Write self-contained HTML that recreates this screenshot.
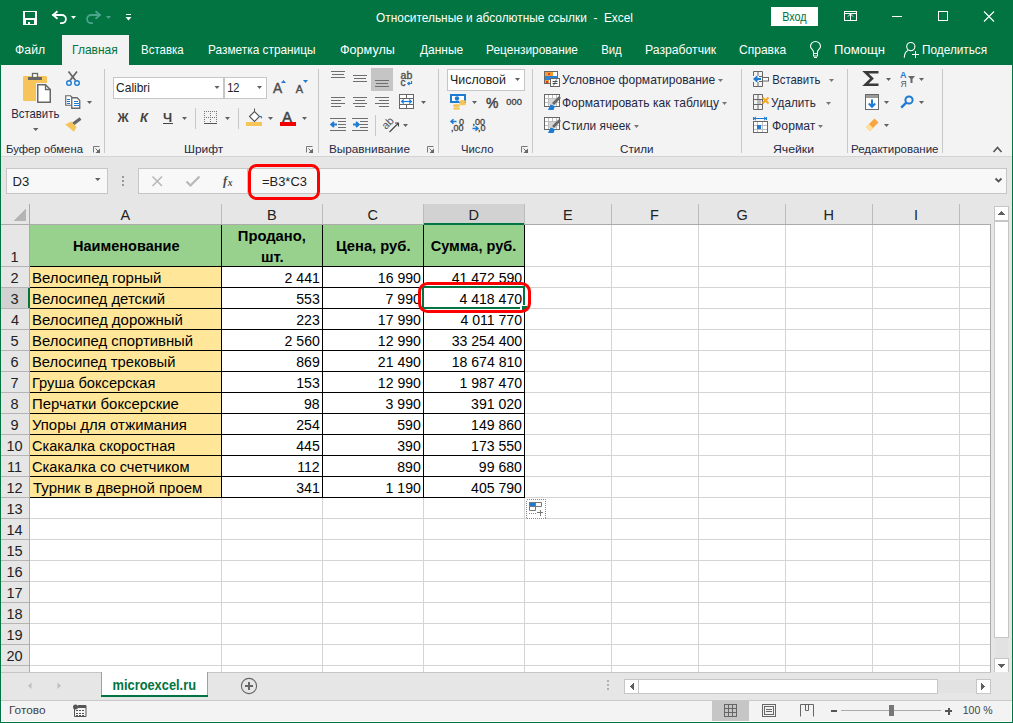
<!DOCTYPE html>
<html><head><meta charset="utf-8"><title>Excel</title>
<style>html,body{margin:0;padding:0;width:1013px;height:723px;overflow:hidden;background:#e6e6e6}
svg{position:absolute;left:0;top:0;display:block}
text{white-space:pre}</style></head><body>
<svg width="1013" height="723" viewBox="0 0 1013 723">
<g shape-rendering="crispEdges">
<rect x="0" y="0" width="1013" height="65" fill="#017441" />
<rect x="62" y="35" width="67" height="30" fill="#f3f3f3" />
<rect x="1" y="65" width="1011" height="91" fill="#f3f3f3" />
<rect x="1" y="156" width="1011" height="1" fill="#d4d4d4" />
<rect x="1" y="157" width="1011" height="515" fill="#e6e6e6" />
<rect x="0" y="65" width="1" height="658" fill="#017441" />
<rect x="1012" y="65" width="1" height="658" fill="#017441" />
<rect x="0" y="722" width="1013" height="1" fill="#017441" />
<rect x="104" y="69" width="1" height="84" fill="#c8c8c8" />
<rect x="318" y="69" width="1" height="84" fill="#c8c8c8" />
<rect x="438" y="69" width="1" height="84" fill="#c8c8c8" />
<rect x="532" y="69" width="1" height="84" fill="#c8c8c8" />
<rect x="741" y="69" width="1" height="84" fill="#c8c8c8" />
<rect x="847" y="69" width="1" height="84" fill="#c8c8c8" />
<rect x="942" y="69" width="1" height="84" fill="#c8c8c8" />
<rect x="6" y="168" width="102" height="26" fill="#c6c6c6" />
<rect x="7" y="169" width="100" height="24" fill="#f8f8f8" />
<rect x="138" y="168" width="110" height="26" fill="#c6c6c6" />
<rect x="139" y="169" width="108" height="24" fill="#f8f8f8" />
<rect x="247" y="168" width="760" height="26" fill="#c6c6c6" />
<rect x="248" y="169" width="758" height="24" fill="#f8f8f8" />
<rect x="122" y="176" width="2" height="2" fill="#9a9a9a" />
<rect x="122" y="180" width="2" height="2" fill="#9a9a9a" />
<rect x="122" y="184" width="2" height="2" fill="#9a9a9a" />
<rect x="30" y="225" width="960" height="447" fill="#ffffff" />
<rect x="424" y="204" width="100" height="20" fill="#d2d2d2" />
<rect x="1" y="288" width="28" height="20" fill="#d2d2d2" />
<rect x="221" y="225" width="1" height="447" fill="#d4d4d4" />
<rect x="322" y="225" width="1" height="447" fill="#d4d4d4" />
<rect x="423" y="225" width="1" height="447" fill="#d4d4d4" />
<rect x="524" y="225" width="1" height="447" fill="#d4d4d4" />
<rect x="611" y="225" width="1" height="447" fill="#d4d4d4" />
<rect x="698" y="225" width="1" height="447" fill="#d4d4d4" />
<rect x="785" y="225" width="1" height="447" fill="#d4d4d4" />
<rect x="872" y="225" width="1" height="447" fill="#d4d4d4" />
<rect x="959" y="225" width="1" height="447" fill="#d4d4d4" />
<rect x="30" y="266" width="960" height="1" fill="#d4d4d4" />
<rect x="30" y="287" width="960" height="1" fill="#d4d4d4" />
<rect x="30" y="308" width="960" height="1" fill="#d4d4d4" />
<rect x="30" y="329" width="960" height="1" fill="#d4d4d4" />
<rect x="30" y="350" width="960" height="1" fill="#d4d4d4" />
<rect x="30" y="371" width="960" height="1" fill="#d4d4d4" />
<rect x="30" y="392" width="960" height="1" fill="#d4d4d4" />
<rect x="30" y="413" width="960" height="1" fill="#d4d4d4" />
<rect x="30" y="434" width="960" height="1" fill="#d4d4d4" />
<rect x="30" y="455" width="960" height="1" fill="#d4d4d4" />
<rect x="30" y="476" width="960" height="1" fill="#d4d4d4" />
<rect x="30" y="497" width="960" height="1" fill="#d4d4d4" />
<rect x="30" y="518" width="960" height="1" fill="#d4d4d4" />
<rect x="30" y="539" width="960" height="1" fill="#d4d4d4" />
<rect x="30" y="560" width="960" height="1" fill="#d4d4d4" />
<rect x="30" y="581" width="960" height="1" fill="#d4d4d4" />
<rect x="30" y="602" width="960" height="1" fill="#d4d4d4" />
<rect x="30" y="623" width="960" height="1" fill="#d4d4d4" />
<rect x="30" y="644" width="960" height="1" fill="#d4d4d4" />
<rect x="30" y="665" width="960" height="1" fill="#d4d4d4" />
<rect x="30" y="225" width="191" height="41" fill="#98d18d" />
<rect x="222" y="225" width="100" height="41" fill="#98d18d" />
<rect x="323" y="225" width="100" height="41" fill="#98d18d" />
<rect x="424" y="225" width="100" height="41" fill="#98d18d" />
<rect x="30" y="267" width="191" height="20" fill="#ffe699" />
<rect x="30" y="288" width="191" height="20" fill="#ffe699" />
<rect x="30" y="309" width="191" height="20" fill="#ffe699" />
<rect x="30" y="330" width="191" height="20" fill="#ffe699" />
<rect x="30" y="351" width="191" height="20" fill="#ffe699" />
<rect x="30" y="372" width="191" height="20" fill="#ffe699" />
<rect x="30" y="393" width="191" height="20" fill="#ffe699" />
<rect x="30" y="414" width="191" height="20" fill="#ffe699" />
<rect x="30" y="435" width="191" height="20" fill="#ffe699" />
<rect x="30" y="456" width="191" height="20" fill="#ffe699" />
<rect x="30" y="477" width="191" height="20" fill="#ffe699" />
<rect x="221" y="225" width="1" height="273" fill="#000" />
<rect x="322" y="225" width="1" height="273" fill="#000" />
<rect x="423" y="225" width="1" height="273" fill="#000" />
<rect x="524" y="225" width="1" height="273" fill="#000" />
<rect x="30" y="266" width="495" height="1" fill="#000" />
<rect x="30" y="287" width="495" height="1" fill="#000" />
<rect x="30" y="308" width="495" height="1" fill="#000" />
<rect x="30" y="329" width="495" height="1" fill="#000" />
<rect x="30" y="350" width="495" height="1" fill="#000" />
<rect x="30" y="371" width="495" height="1" fill="#000" />
<rect x="30" y="392" width="495" height="1" fill="#000" />
<rect x="30" y="413" width="495" height="1" fill="#000" />
<rect x="30" y="434" width="495" height="1" fill="#000" />
<rect x="30" y="455" width="495" height="1" fill="#000" />
<rect x="30" y="476" width="495" height="1" fill="#000" />
<rect x="30" y="497" width="495" height="1" fill="#000" />
<rect x="29" y="204" width="1" height="20" fill="#bcbcbc" />
<rect x="221" y="204" width="1" height="20" fill="#bcbcbc" />
<rect x="322" y="204" width="1" height="20" fill="#bcbcbc" />
<rect x="423" y="204" width="1" height="20" fill="#bcbcbc" />
<rect x="524" y="204" width="1" height="20" fill="#bcbcbc" />
<rect x="611" y="204" width="1" height="20" fill="#bcbcbc" />
<rect x="698" y="204" width="1" height="20" fill="#bcbcbc" />
<rect x="785" y="204" width="1" height="20" fill="#bcbcbc" />
<rect x="872" y="204" width="1" height="20" fill="#bcbcbc" />
<rect x="959" y="204" width="1" height="20" fill="#bcbcbc" />
<rect x="1" y="224" width="990" height="1" fill="#ababab" />
<rect x="29" y="204" width="1" height="468" fill="#ababab" />
<rect x="1" y="266" width="28" height="1" fill="#b4b4b4" />
<rect x="1" y="287" width="28" height="1" fill="#b4b4b4" />
<rect x="1" y="308" width="28" height="1" fill="#b4b4b4" />
<rect x="1" y="329" width="28" height="1" fill="#b4b4b4" />
<rect x="1" y="350" width="28" height="1" fill="#b4b4b4" />
<rect x="1" y="371" width="28" height="1" fill="#b4b4b4" />
<rect x="1" y="392" width="28" height="1" fill="#b4b4b4" />
<rect x="1" y="413" width="28" height="1" fill="#b4b4b4" />
<rect x="1" y="434" width="28" height="1" fill="#b4b4b4" />
<rect x="1" y="455" width="28" height="1" fill="#b4b4b4" />
<rect x="1" y="476" width="28" height="1" fill="#b4b4b4" />
<rect x="1" y="497" width="28" height="1" fill="#b4b4b4" />
<rect x="1" y="518" width="28" height="1" fill="#b4b4b4" />
<rect x="1" y="539" width="28" height="1" fill="#b4b4b4" />
<rect x="1" y="560" width="28" height="1" fill="#b4b4b4" />
<rect x="1" y="581" width="28" height="1" fill="#b4b4b4" />
<rect x="1" y="602" width="28" height="1" fill="#b4b4b4" />
<rect x="1" y="623" width="28" height="1" fill="#b4b4b4" />
<rect x="1" y="644" width="28" height="1" fill="#b4b4b4" />
<rect x="1" y="665" width="28" height="1" fill="#b4b4b4" />
<rect x="424" y="223" width="100" height="2" fill="#017441" />
<rect x="28" y="288" width="2" height="20" fill="#017441" />
<rect x="990" y="224" width="1" height="448" fill="#ababab" />
<rect x="1" y="672" width="990" height="1" fill="#c6c6c6" />
<path d="M26 208 L26 221 L13 221 Z" fill="#b4b4b4" stroke="none" stroke-width="1" />
<rect x="994" y="206" width="15" height="15" fill="#c6c6c6" />
<rect x="995" y="207" width="13" height="13" fill="#ffffff" />
<rect x="994" y="221" width="15" height="417" fill="#c6c6c6" />
<rect x="995" y="222" width="13" height="415" fill="#ffffff" />
<rect x="995" y="638" width="13" height="20" fill="#e2e2e2" />
<rect x="994" y="658" width="15" height="14" fill="#c6c6c6" />
<rect x="995" y="659" width="13" height="13" fill="#ffffff" />
<path d="M997.5 215 L1005 215 L1001.25 211 Z" fill="#606060" stroke="none" stroke-width="1" />
<path d="M997.5 664 L1005 664 L1001.25 668 Z" fill="#606060" stroke="none" stroke-width="1" />
<rect x="1" y="673" width="1011" height="27" fill="#e6e6e6" />
<rect x="101" y="672" width="1" height="24" fill="#a0a0a0" />
<rect x="207" y="672" width="1" height="24" fill="#a0a0a0" />
<rect x="102" y="672" width="105" height="23" fill="#ffffff" />
<rect x="101" y="695" width="107" height="2" fill="#017441" />
<rect x="1" y="700" width="1011" height="1" fill="#c8c8c8" />
<rect x="607" y="680" width="2" height="2" fill="#b0b0b0" />
<rect x="607" y="684" width="2" height="2" fill="#b0b0b0" />
<rect x="607" y="688" width="2" height="2" fill="#b0b0b0" />
<rect x="624" y="679" width="15" height="15" fill="#c6c6c6" />
<rect x="625" y="680" width="13" height="13" fill="#ffffff" />
<rect x="638" y="679" width="300" height="15" fill="#c6c6c6" />
<rect x="639" y="680" width="298" height="13" fill="#ffffff" />
<rect x="938" y="680" width="38" height="13" fill="#e2e2e2" />
<rect x="976" y="679" width="15" height="15" fill="#c6c6c6" />
<rect x="977" y="680" width="13" height="13" fill="#ffffff" />
<path d="M634 683 L634 690.5 L630 686.75 Z" fill="#606060" stroke="none" stroke-width="1" />
<path d="M981 683 L981 690.5 L985 686.75 Z" fill="#606060" stroke="none" stroke-width="1" />
<rect x="1" y="701" width="1011" height="21" fill="#ffffff" />
<rect x="2" y="701" width="1009" height="20" fill="#f3f3f3" />
<rect x="712" y="701" width="37" height="20" fill="#c6c6c6" />
<rect x="771" y="7" width="47" height="19" fill="#ffffff" rx="1"/>
</g>
<g>
<rect x="23" y="11" width="14" height="14" fill="#ffffff" shape-rendering="crispEdges"/>
<rect x="25" y="12" width="10" height="5.5" fill="#017441" shape-rendering="crispEdges"/>
<rect x="26" y="20" width="8" height="4" fill="#017441" shape-rendering="crispEdges"/>
<rect x="28" y="22" width="2" height="2" fill="#ffffff" shape-rendering="crispEdges"/>
<path d="M52.5 15 H61.8 A4.1 4.1 0 0 1 61.8 23.2 H60" fill="none" stroke="#fff" stroke-width="1.8"/>
<path d="M57.5 11.2 L53 15 L57.5 18.8" fill="none" stroke="#fff" stroke-width="1.8"/>
<path d="M71 16 h5 l-2.5 3 z" fill="#ffffff"/>
<g transform="translate(153,0) scale(-1,1)"><path d="M52.5 15 H61.8 A4.1 4.1 0 0 1 61.8 23.2 H60" fill="none" stroke="#4aa58c" stroke-width="1.8"/><path d="M57.5 11.2 L53 15 L57.5 18.8" fill="none" stroke="#4aa58c" stroke-width="1.8"/></g>
<path d="M106 16 h5 l-2.5 3 z" fill="#4aa58c"/>
<rect x="126" y="14" width="5" height="1.2" fill="#ffffff" shape-rendering="crispEdges"/>
<path d="M125.5 17 h6 l-3.0 3.5 z" fill="#ffffff"/>
<rect x="844.5" y="11.5" width="12" height="9" fill="none" stroke="#fff" stroke-width="1"/>
<rect x="845" y="13" width="11" height="1" fill="#ffffff" shape-rendering="crispEdges"/>
<rect x="850" y="14" width="1" height="6.5" fill="#ffffff" shape-rendering="crispEdges"/>
<path d="M848 16.5 L850.5 14 L853 16.5" fill="none" stroke="#fff" stroke-width="1"/>
<rect x="892" y="16" width="10" height="1" fill="#ffffff" shape-rendering="crispEdges"/>
<rect x="938.5" y="11.5" width="9" height="9" fill="none" stroke="#fff" stroke-width="1"/>
<path d="M984 11.5 L994 21.5 M994 11.5 L984 21.5" stroke="#fff" stroke-width="1.1"/>
<path d="M813.5 53 V51.5 C813 49.5 810.5 48.5 810.5 46.5 A5 5 0 0 1 820.5 46.5 C820.5 48.5 818 49.5 817.5 51.5 V53" fill="none" stroke="#fff" stroke-width="1.1"/>
<rect x="813.5" y="53.5" width="4" height="2.5" fill="none" stroke="#fff" stroke-width="1"/>
<rect x="814" y="57" width="3" height="1" fill="#ffffff" shape-rendering="crispEdges"/>
<circle cx="910.8" cy="46.6" r="4.1" fill="none" stroke="#fff" stroke-width="1.1"/>
<path d="M907.8 50.5 C905.5 51.8 904.3 54.5 904.3 57.8" fill="none" stroke="#fff" stroke-width="1.1"/>
<rect x="912" y="54" width="7" height="1" fill="#ffffff" shape-rendering="crispEdges"/>
<rect x="915" y="51" width="1" height="7" fill="#ffffff" shape-rendering="crispEdges"/>
<rect x="23" y="76" width="24" height="25" rx="1.2" fill="#f7c45a"/>
<rect x="36" y="83" width="16" height="21" fill="#f3f3f3" shape-rendering="crispEdges"/>
<rect x="28" y="77" width="14" height="3" fill="#676767" shape-rendering="crispEdges"/>
<rect x="32.5" y="73.5" width="5" height="4" fill="#fff" stroke="#676767" stroke-width="1.3"/>
<path d="M37.75 84.75 H45.5 L50.25 89.5 V102.25 H37.75 Z" fill="#fff" stroke="#676767" stroke-width="1.5"/>
<path d="M45.5 84.75 V89.5 H50.25" fill="none" stroke="#676767" stroke-width="1.3"/>
<path d="M33 128 h5.5 l-2.75 3 z" fill="#606060"/>
<path d="M68.5 71.5 L75.5 80.5 M77 71.5 L70 80.5" stroke="#676767" stroke-width="1.8"/>
<circle cx="69" cy="83" r="2.3" fill="none" stroke="#1e7bd3" stroke-width="1.4"/><circle cx="77" cy="83" r="2.3" fill="none" stroke="#1e7bd3" stroke-width="1.4"/>
<path d="M65.75 95.75 H70.5 L72.5 97.75 V105.25 H65.75 Z" fill="#fff" stroke="#676767" stroke-width="1.2"/>
<rect x="67" y="99" width="3" height="1" fill="#1e7bd3" shape-rendering="crispEdges"/>
<rect x="67" y="101" width="3" height="1" fill="#1e7bd3" shape-rendering="crispEdges"/>
<rect x="67" y="103" width="3" height="1" fill="#1e7bd3" shape-rendering="crispEdges"/>
<path d="M71.75 97.75 H77 L79.75 100.5 V108.25 H71.75 Z" fill="#fff" stroke="#676767" stroke-width="1.3"/>
<rect x="73.5" y="101" width="4" height="1" fill="#1e7bd3" shape-rendering="crispEdges"/>
<rect x="73.5" y="103" width="5" height="1" fill="#1e7bd3" shape-rendering="crispEdges"/>
<rect x="73.5" y="105" width="5" height="1" fill="#1e7bd3" shape-rendering="crispEdges"/>
<path d="M87 101 h5 l-2.5 3 z" fill="#606060"/>
<path d="M72.5 124.5 L80.5 118.5" stroke="#676767" stroke-width="3.2"/>
<path d="M65.2 124.6 L71.2 121.5 L76.5 127 L74 131.8 Z" fill="#f7c45a"/>
<path d="M93.5 152.5 V146.5 H99.5" fill="none" stroke="#777" stroke-width="1"/>
<path d="M100 153 V148.5 L95.5 153 Z" fill="#666"/>
<path d="M95.5 148.5 L98.5 151.5" stroke="#666" stroke-width="1"/>
<path d="M306.5 152.5 V146.5 H312.5" fill="none" stroke="#777" stroke-width="1"/>
<path d="M313 153 V148.5 L308.5 153 Z" fill="#666"/>
<path d="M308.5 148.5 L311.5 151.5" stroke="#666" stroke-width="1"/>
<path d="M427.5 152.5 V146.5 H433.5" fill="none" stroke="#777" stroke-width="1"/>
<path d="M434 153 V148.5 L429.5 153 Z" fill="#666"/>
<path d="M429.5 148.5 L432.5 151.5" stroke="#666" stroke-width="1"/>
<path d="M521.5 152.5 V146.5 H527.5" fill="none" stroke="#777" stroke-width="1"/>
<path d="M528 153 V148.5 L523.5 153 Z" fill="#666"/>
<path d="M523.5 148.5 L526.5 151.5" stroke="#666" stroke-width="1"/>
<rect x="113" y="77" width="111" height="22" fill="#c6c6c6" shape-rendering="crispEdges"/>
<rect x="114" y="78" width="109" height="20" fill="#ffffff" shape-rendering="crispEdges"/>
<rect x="224" y="77" width="43" height="22" fill="#c6c6c6" shape-rendering="crispEdges"/>
<rect x="225" y="78" width="41" height="20" fill="#ffffff" shape-rendering="crispEdges"/>
<path d="M214.5 86 h5 l-2.5 3 z" fill="#606060"/>
<path d="M257 86 h5 l-2.5 3 z" fill="#606060"/>
<text transform="translate(273,93) scale(0.95,1)" font-family="Liberation Sans" font-size="14.5" fill="#4a4a4a" stroke="#4a4a4a" stroke-width="0.4">A</text>
<path d="M281 83 L283.5 80 L286 83 Z" fill="#1e7bd3"/>
<text transform="translate(295.8,93) scale(0.95,1)" font-family="Liberation Sans" font-size="11.5" fill="#4a4a4a" stroke="#4a4a4a" stroke-width="0.4">A</text>
<path d="M303 80 L308 80 L305.5 83 Z" fill="#1e7bd3"/>
<text transform="translate(117.5,122) scale(0.95,1)" font-family="Liberation Sans" font-size="13" font-weight="bold" fill="#444">Ж</text>
<text x="140" y="122" font-family="Liberation Sans" font-size="13" font-weight="bold" font-style="italic" fill="#444">К</text>
<text x="163" y="122" font-family="Liberation Sans" font-size="13" font-weight="bold" fill="#444">Ч</text>
<rect x="163" y="123" width="10" height="1.3" fill="#444" shape-rendering="crispEdges"/>
<path d="M182 117 h5 l-2.5 3 z" fill="#606060"/>
<rect x="195" y="108" width="1" height="21" fill="#c8c8c8" shape-rendering="crispEdges"/>
<rect x="204" y="111" width="1" height="1" fill="#777" shape-rendering="crispEdges"/>
<rect x="204" y="117" width="1" height="1" fill="#777" shape-rendering="crispEdges"/>
<rect x="206" y="111" width="1" height="1" fill="#777" shape-rendering="crispEdges"/>
<rect x="206" y="117" width="1" height="1" fill="#777" shape-rendering="crispEdges"/>
<rect x="208" y="111" width="1" height="1" fill="#777" shape-rendering="crispEdges"/>
<rect x="208" y="117" width="1" height="1" fill="#777" shape-rendering="crispEdges"/>
<rect x="210" y="111" width="1" height="1" fill="#777" shape-rendering="crispEdges"/>
<rect x="210" y="117" width="1" height="1" fill="#777" shape-rendering="crispEdges"/>
<rect x="212" y="111" width="1" height="1" fill="#777" shape-rendering="crispEdges"/>
<rect x="212" y="117" width="1" height="1" fill="#777" shape-rendering="crispEdges"/>
<rect x="214" y="111" width="1" height="1" fill="#777" shape-rendering="crispEdges"/>
<rect x="214" y="117" width="1" height="1" fill="#777" shape-rendering="crispEdges"/>
<rect x="216" y="111" width="1" height="1" fill="#777" shape-rendering="crispEdges"/>
<rect x="216" y="117" width="1" height="1" fill="#777" shape-rendering="crispEdges"/>
<rect x="204" y="111" width="1" height="1" fill="#777" shape-rendering="crispEdges"/>
<rect x="210" y="111" width="1" height="1" fill="#777" shape-rendering="crispEdges"/>
<rect x="216" y="111" width="1" height="1" fill="#777" shape-rendering="crispEdges"/>
<rect x="204" y="113" width="1" height="1" fill="#777" shape-rendering="crispEdges"/>
<rect x="210" y="113" width="1" height="1" fill="#777" shape-rendering="crispEdges"/>
<rect x="216" y="113" width="1" height="1" fill="#777" shape-rendering="crispEdges"/>
<rect x="204" y="115" width="1" height="1" fill="#777" shape-rendering="crispEdges"/>
<rect x="210" y="115" width="1" height="1" fill="#777" shape-rendering="crispEdges"/>
<rect x="216" y="115" width="1" height="1" fill="#777" shape-rendering="crispEdges"/>
<rect x="204" y="117" width="1" height="1" fill="#777" shape-rendering="crispEdges"/>
<rect x="210" y="117" width="1" height="1" fill="#777" shape-rendering="crispEdges"/>
<rect x="216" y="117" width="1" height="1" fill="#777" shape-rendering="crispEdges"/>
<rect x="204" y="119" width="1" height="1" fill="#777" shape-rendering="crispEdges"/>
<rect x="210" y="119" width="1" height="1" fill="#777" shape-rendering="crispEdges"/>
<rect x="216" y="119" width="1" height="1" fill="#777" shape-rendering="crispEdges"/>
<rect x="204" y="121" width="1" height="1" fill="#777" shape-rendering="crispEdges"/>
<rect x="210" y="121" width="1" height="1" fill="#777" shape-rendering="crispEdges"/>
<rect x="216" y="121" width="1" height="1" fill="#777" shape-rendering="crispEdges"/>
<rect x="204" y="123" width="13" height="1.2" fill="#555" shape-rendering="crispEdges"/>
<path d="M225 117 h5 l-2.5 3 z" fill="#606060"/>
<rect x="238" y="108" width="1" height="21" fill="#c8c8c8" shape-rendering="crispEdges"/>
<path d="M249.5 116.5 L254.5 111.5 L259.5 116.5 L254.5 121.5 Z" fill="#fff" stroke="#555" stroke-width="1.1"/>
<path d="M254.5 111.5 V108.5" stroke="#555" stroke-width="1"/>
<path d="M259.5 116.5 C261.5 114.5 262.5 116.5 261.8 119 C261 117.5 260.5 117.5 259.5 116.5 Z" fill="#1e7bd3"/>
<rect x="246" y="122" width="16" height="4" fill="#f7c45a" shape-rendering="crispEdges"/>
<path d="M268 117 h5 l-2.5 3 z" fill="#606060"/>
<text transform="translate(282.3,122) scale(1.0,1)" font-family="Liberation Sans" font-size="14.5" fill="#444" stroke="#444" stroke-width="0.5">A</text>
<rect x="280" y="122" width="16" height="4" fill="#f20000" shape-rendering="crispEdges"/>
<path d="M302 117 h5 l-2.5 3 z" fill="#606060"/>
<rect x="331" y="71" width="14" height="1" fill="#6e6e6e" shape-rendering="crispEdges"/>
<rect x="332" y="74" width="12" height="1" fill="#6e6e6e" shape-rendering="crispEdges"/>
<rect x="331" y="77" width="14" height="1" fill="#6e6e6e" shape-rendering="crispEdges"/>
<rect x="353" y="75" width="14" height="1" fill="#6e6e6e" shape-rendering="crispEdges"/>
<rect x="354" y="78" width="12" height="1" fill="#6e6e6e" shape-rendering="crispEdges"/>
<rect x="353" y="81" width="14" height="1" fill="#6e6e6e" shape-rendering="crispEdges"/>
<rect x="371" y="68" width="22" height="23" fill="#c5c5c5" shape-rendering="crispEdges"/>
<rect x="375" y="80" width="14" height="1" fill="#6e6e6e" shape-rendering="crispEdges"/>
<rect x="376" y="83" width="12" height="1" fill="#6e6e6e" shape-rendering="crispEdges"/>
<rect x="375" y="86" width="14" height="1" fill="#6e6e6e" shape-rendering="crispEdges"/>
<rect x="331" y="97" width="14" height="1" fill="#6e6e6e" shape-rendering="crispEdges"/>
<rect x="353" y="97" width="14" height="1" fill="#6e6e6e" shape-rendering="crispEdges"/>
<rect x="375" y="97" width="14" height="1" fill="#6e6e6e" shape-rendering="crispEdges"/>
<rect x="331" y="100" width="10" height="1" fill="#6e6e6e" shape-rendering="crispEdges"/>
<rect x="355" y="100" width="10" height="1" fill="#6e6e6e" shape-rendering="crispEdges"/>
<rect x="379" y="100" width="10" height="1" fill="#6e6e6e" shape-rendering="crispEdges"/>
<rect x="331" y="103" width="14" height="1" fill="#6e6e6e" shape-rendering="crispEdges"/>
<rect x="353" y="103" width="14" height="1" fill="#6e6e6e" shape-rendering="crispEdges"/>
<rect x="375" y="103" width="14" height="1" fill="#6e6e6e" shape-rendering="crispEdges"/>
<rect x="331" y="106" width="10" height="1" fill="#6e6e6e" shape-rendering="crispEdges"/>
<rect x="355" y="106" width="10" height="1" fill="#6e6e6e" shape-rendering="crispEdges"/>
<rect x="379" y="106" width="10" height="1" fill="#6e6e6e" shape-rendering="crispEdges"/>
<text transform="translate(400.6,78.6) scale(1.05,1)" font-family="Liberation Sans" font-size="10" fill="#505050" stroke="#505050" stroke-width="0.35">ab</text>
<text x="400.6" y="86" font-family="Liberation Sans" font-size="10" fill="#505050" stroke="#505050" stroke-width="0.35">c</text>
<path d="M411.5 81 V83.5 H408.5" fill="none" stroke="#1e7bd3" stroke-width="1.2"/><path d="M409.5 82 L407.8 83.5 L409.5 85" fill="none" stroke="#1e7bd3" stroke-width="1.2"/>
<rect x="399.5" y="94.5" width="14" height="14" fill="#fff" stroke="#676767" stroke-width="1" shape-rendering="crispEdges"/>
<rect x="400" y="98" width="13" height="1" fill="#676767" shape-rendering="crispEdges"/>
<rect x="400" y="104" width="13" height="1" fill="#676767" shape-rendering="crispEdges"/>
<rect x="406" y="95" width="1" height="3" fill="#676767" shape-rendering="crispEdges"/>
<rect x="406" y="105" width="1" height="3" fill="#676767" shape-rendering="crispEdges"/>
<path d="M402 101.5 H411" stroke="#1e7bd3" stroke-width="1.2"/><path d="M403.8 99.5 L401.6 101.5 L403.8 103.5 M409.2 99.5 L411.4 101.5 L409.2 103.5" fill="none" stroke="#1e7bd3" stroke-width="1.2"/>
<path d="M421 101 h5 l-2.5 3 z" fill="#606060"/>
<rect x="330" y="118" width="16" height="1" fill="#6e6e6e" shape-rendering="crispEdges"/>
<rect x="330" y="130" width="16" height="1" fill="#6e6e6e" shape-rendering="crispEdges"/>
<rect x="338" y="121" width="8" height="1" fill="#6e6e6e" shape-rendering="crispEdges"/>
<rect x="338" y="124" width="8" height="1" fill="#6e6e6e" shape-rendering="crispEdges"/>
<rect x="338" y="127" width="8" height="1" fill="#6e6e6e" shape-rendering="crispEdges"/>
<rect x="352" y="118" width="16" height="1" fill="#6e6e6e" shape-rendering="crispEdges"/>
<rect x="352" y="130" width="16" height="1" fill="#6e6e6e" shape-rendering="crispEdges"/>
<rect x="360" y="121" width="8" height="1" fill="#6e6e6e" shape-rendering="crispEdges"/>
<rect x="360" y="124" width="8" height="1" fill="#6e6e6e" shape-rendering="crispEdges"/>
<rect x="360" y="127" width="8" height="1" fill="#6e6e6e" shape-rendering="crispEdges"/>
<path d="M337 124.5 H331.5 M334 122 L331.3 124.5 L334 127" fill="none" stroke="#1e7bd3" stroke-width="2"/>
<path d="M353 124.5 H358.5 M356 122 L358.7 124.5 L356 127" fill="none" stroke="#1e7bd3" stroke-width="2"/>
<rect x="375" y="115" width="1" height="21" fill="#c8c8c8" shape-rendering="crispEdges"/>
<text transform="translate(386,130) rotate(-45)" font-family="Liberation Sans" font-size="11" fill="#555">ab</text>
<path d="M389.5 132 L398.5 123 M395 123 H398.5 V126.5" fill="none" stroke="#444" stroke-width="1.1"/>
<path d="M403 124 h5 l-2.5 3 z" fill="#606060"/>
<rect x="447" y="69" width="78" height="22" fill="#c6c6c6" shape-rendering="crispEdges"/>
<rect x="448" y="70" width="76" height="20" fill="#ffffff" shape-rendering="crispEdges"/>
<path d="M515 78 h5 l-2.5 3 z" fill="#606060"/>
<rect x="451" y="95" width="14" height="7" fill="#fff" stroke="#1e7bd3" stroke-width="2"/>
<circle cx="457" cy="98.5" r="2.2" fill="#1e7bd3"/>
<ellipse cx="462.5" cy="101.5" rx="3.5" ry="1.5" fill="#f7c45a"/><ellipse cx="462.5" cy="104" rx="3.5" ry="1.3" fill="#f7c45a"/>
<ellipse cx="456.5" cy="105.5" rx="3.5" ry="1.5" fill="#f7c45a"/><ellipse cx="456.5" cy="108.5" rx="3.5" ry="1.3" fill="#f7c45a"/>
<path d="M472 101 h5 l-2.5 3 z" fill="#606060"/>
<text transform="translate(486,108) scale(0.93,1)" font-family="Liberation Sans" font-size="15" fill="#444" stroke="#444" stroke-width="0.45">%</text>
<text transform="translate(506.3,105.2) scale(0.95,1)" font-family="Liberation Sans" font-size="9.8" fill="#444" stroke="#444" stroke-width="0.35">000</text>
<path d="M456.5 121.5 H451 M453.5 119.3 L451 121.5 L453.5 123.7" fill="none" stroke="#1e7bd3" stroke-width="1.5"/>
<text x="459" y="124.5" font-family="Liberation Sans" font-size="9" fill="#444" stroke="#444" stroke-width="0.3">0</text>
<text x="451" y="131" font-family="Liberation Sans" font-size="9" fill="#444" stroke="#444" stroke-width="0.3">,00</text>
<text x="472.5" y="124.5" font-family="Liberation Sans" font-size="9" fill="#444" stroke="#444" stroke-width="0.3">,00</text>
<path d="M472.5 128.5 H478 M475.5 126.3 L478 128.5 L475.5 130.7" fill="none" stroke="#1e7bd3" stroke-width="1.5"/>
<text x="478" y="131" font-family="Liberation Sans" font-size="9" fill="#444" stroke="#444" stroke-width="0.3">,0</text>
<rect x="544.5" y="71.5" width="13" height="12" fill="#fff" stroke="#676767" stroke-width="1"/>
<rect x="545" y="72" width="8" height="4" fill="#f39c34" shape-rendering="crispEdges"/>
<rect x="545" y="76" width="12" height="4" fill="#2b83d5" shape-rendering="crispEdges"/>
<rect x="545" y="80" width="4" height="3" fill="#f39c34" shape-rendering="crispEdges"/>
<rect x="548" y="73" width="2" height="2" fill="#e03a1a" shape-rendering="crispEdges"/>
<rect x="546" y="81" width="2" height="2" fill="#e03a1a" shape-rendering="crispEdges"/>
<rect x="550.5" y="78.5" width="9" height="8" fill="#fff" stroke="#676767" stroke-width="1"/>
<path d="M552.5 81.5 H557.5 M552.5 83.5 H557.5 M556.5 79.5 L553.5 85.5" stroke="#444" stroke-width="0.9"/>
<rect x="544.5" y="94.5" width="15" height="12" fill="#fff" stroke="#676767" stroke-width="1"/>
<rect x="548" y="95" width="1" height="11" fill="#bdbdbd" shape-rendering="crispEdges"/>
<rect x="552" y="95" width="1" height="11" fill="#bdbdbd" shape-rendering="crispEdges"/>
<rect x="556" y="95" width="1" height="11" fill="#bdbdbd" shape-rendering="crispEdges"/>
<rect x="545" y="98" width="14" height="1" fill="#bdbdbd" shape-rendering="crispEdges"/>
<rect x="545" y="102" width="14" height="1" fill="#bdbdbd" shape-rendering="crispEdges"/>
<rect x="549" y="99" width="7" height="6" fill="#d5d5d5" shape-rendering="crispEdges"/>
<path d="M553 104 L560 97" stroke="#676767" stroke-width="2.6"/>
<path d="M548 110 L550.5 104.5 L555 106 L553.5 110 Z" fill="#1e7bd3"/>
<rect x="544.5" y="117.5" width="15" height="12" fill="#fff" stroke="#676767" stroke-width="1"/>
<rect x="548" y="118" width="1" height="11" fill="#bdbdbd" shape-rendering="crispEdges"/>
<rect x="552" y="118" width="1" height="11" fill="#bdbdbd" shape-rendering="crispEdges"/>
<rect x="556" y="118" width="1" height="11" fill="#bdbdbd" shape-rendering="crispEdges"/>
<rect x="545" y="121" width="14" height="1" fill="#bdbdbd" shape-rendering="crispEdges"/>
<rect x="545" y="125" width="14" height="1" fill="#bdbdbd" shape-rendering="crispEdges"/>
<rect x="549" y="122" width="7" height="6" fill="#d5d5d5" shape-rendering="crispEdges"/>
<path d="M553 127 L560 120" stroke="#676767" stroke-width="2.6"/>
<path d="M548 133 L550.5 127.5 L555 129 L553.5 133 Z" fill="#1e7bd3"/>
<path d="M718 79 h5 l-2.5 3 z" fill="#777"/>
<path d="M722 102 h5 l-2.5 3 z" fill="#777"/>
<path d="M634 125 h5 l-2.5 3 z" fill="#777"/>
<path d="M753.5 71.5 h9 v15 h-9 z M753.5 76.5 h9 M753.5 81.5 h9 M758 71.5 v5 M758 81.5 v5" fill="none" stroke="#676767" stroke-width="1"/>
<rect x="762.5" y="77.5" width="6" height="3.5" fill="#fff" stroke="#676767" stroke-width="1"/>
<rect x="753" y="76" width="6" height="6" fill="#f3f3f3" shape-rendering="crispEdges"/>
<path d="M761 79 H754.5 M757.3 76.5 L754.5 79 L757.3 81.5" fill="none" stroke="#1e7bd3" stroke-width="2"/>
<path d="M753.5 94.5 h9 v15 h-9 z M753.5 99.5 h9 M753.5 104.5 h9 M758 94.5 v5 M758 104.5 v5" fill="none" stroke="#676767" stroke-width="1"/>
<rect x="757" y="100" width="4" height="4" fill="#bdbdbd" shape-rendering="crispEdges"/>
<path d="M762.5 97.5 L768.5 103.5 M768.5 97.5 L762.5 103.5" stroke="#f5a623" stroke-width="1.8"/>
<path d="M753.5 117 V120 M766.5 117 V120 M754 118.5 H766" stroke="#1e7bd3" stroke-width="1"/><path d="M756 116.8 L754 118.5 L756 120.2 M764 116.8 L766 118.5 L764 120.2" fill="none" stroke="#1e7bd3" stroke-width="1"/>
<rect x="753.5" y="121.5" width="14" height="11" fill="#fff" stroke="#676767" stroke-width="1"/>
<rect x="757" y="122" width="1" height="10" fill="#bdbdbd" shape-rendering="crispEdges"/>
<rect x="762" y="122" width="1" height="10" fill="#bdbdbd" shape-rendering="crispEdges"/>
<rect x="754" y="125" width="13" height="1" fill="#bdbdbd" shape-rendering="crispEdges"/>
<rect x="754" y="129" width="13" height="1" fill="#bdbdbd" shape-rendering="crispEdges"/>
<rect x="757" y="125" width="4" height="4" fill="#1e7bd3" shape-rendering="crispEdges"/>
<path d="M829 79 h5 l-2.5 3 z" fill="#777"/>
<path d="M826 102 h5 l-2.5 3 z" fill="#777"/>
<path d="M818 125 h5 l-2.5 3 z" fill="#777"/>
<path d="M878.5 72.3 H865.5 L872 78.5 L865.5 84.8 H878.5" fill="none" stroke="#3a3a3a" stroke-width="2.6" stroke-linejoin="miter"/>
<path d="M886 78 h5 l-2.5 3 z" fill="#606060"/>
<text x="900" y="78" font-family="Liberation Sans" font-size="9" font-weight="bold" fill="#1e7bd3">A</text>
<text x="900.5" y="87" font-family="Liberation Sans" font-size="8.5" fill="#555">Я</text>
<path d="M908 76 H915 L912.5 79 V83 H910.5 V79 Z" fill="#676767"/>
<path d="M919 78 h5 l-2.5 3 z" fill="#606060"/>
<rect x="865.5" y="94.5" width="13" height="15" fill="#fff" stroke="#676767" stroke-width="1"/>
<rect x="866" y="95" width="12" height="3" fill="#9a9a9a" shape-rendering="crispEdges"/>
<path d="M872 99.5 V106.5 M868.8 103.5 L872 106.8 L875.2 103.5" fill="none" stroke="#1e7bd3" stroke-width="2"/>
<path d="M884 101 h5 l-2.5 3 z" fill="#606060"/>
<circle cx="909" cy="100" r="3.6" fill="none" stroke="#1e7bd3" stroke-width="2"/><path d="M906.3 102.7 L901.2 107.6" stroke="#1e7bd3" stroke-width="2.4"/>
<path d="M919 101 h5 l-2.5 3 z" fill="#606060"/>
<path d="M866 127 L874.5 118.5 L878.5 122.5 L870 131 Z" fill="#f7a640"/><path d="M866 127 L869 124 L873 128 L870 131 Z" fill="#fde39a"/>
<path d="M884 124 h5 l-2.5 3 z" fill="#606060"/>
<path d="M993.5 152 L997.5 147.5 L1001.5 152" fill="none" stroke="#555" stroke-width="1.6"/>
<path d="M95 178 h5.5 l-2.75 3 z" fill="#606060"/>
<path d="M152.5 176.5 L162 186 M162 176.5 L152.5 186" stroke="#b8b8b8" stroke-width="1.6"/>
<path d="M186.5 181.5 L190.5 185.5 L199.5 176.5" fill="none" stroke="#b8b8b8" stroke-width="2.2"/>
<text x="223" y="185" font-family="Liberation Serif" font-size="12.5" font-style="italic" font-weight="bold" fill="#4a4a4a">f</text>
<text x="227.8" y="185.5" font-family="Liberation Serif" font-size="9.5" font-style="italic" font-weight="bold" fill="#4a4a4a">x</text>
<path d="M995.5 178.5 L998.5 181.5 L1001.5 178.5" fill="none" stroke="#555" stroke-width="1.8"/>
<rect x="526.5" y="499.5" width="19" height="19" fill="#fff" stroke="#8a8a8a" stroke-width="1" stroke-dasharray="1,1" shape-rendering="crispEdges"/>
<rect x="529" y="502" width="6" height="4" fill="#1e7bd3" shape-rendering="crispEdges"/>
<path d="M529.5 502.5 H541.5 V506.5 H529.5 Z M529.5 506.5 V510.5 H535.5 V502.5" fill="none" stroke="#777" stroke-width="1"/>
<rect x="537" y="512" width="6" height="1" fill="#777" shape-rendering="crispEdges"/>
<rect x="539.5" y="509.5" width="1" height="6" fill="#777" shape-rendering="crispEdges"/>
<rect x="529" y="513" width="1" height="1" fill="#888" shape-rendering="crispEdges"/>
<rect x="531" y="513" width="1" height="1" fill="#888" shape-rendering="crispEdges"/>
<rect x="533" y="513" width="1" height="1" fill="#888" shape-rendering="crispEdges"/>
<rect x="535" y="513" width="1" height="1" fill="#888" shape-rendering="crispEdges"/>
<path d="M31.5 682.5 V689 L28 685.75 Z" fill="#c0c0c0"/><path d="M57.5 682.5 V689 L61 685.75 Z" fill="#c0c0c0"/>
<circle cx="249" cy="686" r="7.6" fill="none" stroke="#666" stroke-width="1.1"/>
<rect x="245" y="685" width="8" height="2" fill="#666" shape-rendering="crispEdges"/>
<rect x="248" y="682" width="2" height="8" fill="#666" shape-rendering="crispEdges"/>
<circle cx="75.5" cy="707" r="2.5" fill="#555"/>
<path d="M78 705.5 H86 V716.5 H74.5 V709" fill="none" stroke="#555" stroke-width="1"/>
<rect x="78" y="705" width="8" height="2.5" fill="#555" shape-rendering="crispEdges"/>
<rect x="76" y="710" width="2" height="1.2" fill="#555" shape-rendering="crispEdges"/>
<rect x="79" y="710" width="2" height="1.2" fill="#555" shape-rendering="crispEdges"/>
<rect x="82" y="710" width="2" height="1.2" fill="#555" shape-rendering="crispEdges"/>
<rect x="76" y="712.5" width="2" height="1.2" fill="#555" shape-rendering="crispEdges"/>
<rect x="79" y="712.5" width="2" height="1.2" fill="#555" shape-rendering="crispEdges"/>
<rect x="82" y="712.5" width="2" height="1.2" fill="#555" shape-rendering="crispEdges"/>
<rect x="76" y="715" width="2" height="1.2" fill="#555" shape-rendering="crispEdges"/>
<rect x="79" y="715" width="2" height="1.2" fill="#555" shape-rendering="crispEdges"/>
<rect x="82" y="715" width="2" height="1.2" fill="#555" shape-rendering="crispEdges"/>
<rect x="724.5" y="704.5" width="12" height="12" fill="none" stroke="#666" stroke-width="1"/>
<rect x="728" y="705" width="1" height="11" fill="#666" shape-rendering="crispEdges"/>
<rect x="732" y="705" width="1" height="11" fill="#666" shape-rendering="crispEdges"/>
<rect x="725" y="708" width="11" height="1" fill="#666" shape-rendering="crispEdges"/>
<rect x="725" y="712" width="11" height="1" fill="#666" shape-rendering="crispEdges"/>
<rect x="762.5" y="704.5" width="13" height="12" fill="none" stroke="#666" stroke-width="1"/><rect x="764.5" y="706.5" width="9" height="8" fill="none" stroke="#666" stroke-width="1"/>
<rect x="766" y="709" width="6" height="1" fill="#666" shape-rendering="crispEdges"/>
<rect x="766" y="711" width="6" height="1" fill="#666" shape-rendering="crispEdges"/>
<path d="M800.5 716.5 V704.5 H813.5 V716.5 M805.5 704.5 V710.5 H808.5 V704.5" fill="none" stroke="#666" stroke-width="1"/>
<rect x="831" y="710" width="6" height="2" fill="#555" shape-rendering="crispEdges"/>
<rect x="841" y="710" width="100" height="1" fill="#aaaaaa" shape-rendering="crispEdges"/>
<rect x="889" y="705" width="5" height="11" fill="#777" shape-rendering="crispEdges"/>
<rect x="945" y="710" width="7" height="2" fill="#555" shape-rendering="crispEdges"/>
<rect x="947.5" y="707.5" width="2" height="7" fill="#555" shape-rendering="crispEdges"/>
</g>
<g>
<text transform="translate(376.09,22) scale(0.9078,1)" font-family="Liberation Sans" font-size="13.08" font-weight="normal" font-style="normal" fill="#ffffff">Относительные и абсолютные ссылки  -  Excel</text>
<text transform="translate(782.17,21) scale(0.8276,1)" font-family="Liberation Sans" font-size="13.08" font-weight="normal" font-style="normal" fill="#017441">Вход</text>
<text transform="translate(15.07,54) scale(0.9333,1)" font-family="Liberation Sans" font-size="13.08" font-weight="normal" font-style="normal" fill="#ffffff">Файл</text>
<text transform="translate(141.12,54) scale(0.8750,1)" font-family="Liberation Sans" font-size="13.08" font-weight="normal" font-style="normal" fill="#ffffff">Вставка</text>
<text transform="translate(208.09,54) scale(0.9060,1)" font-family="Liberation Sans" font-size="13.08" font-weight="normal" font-style="normal" fill="#ffffff">Разметка страницы</text>
<text transform="translate(340.04,54) scale(0.9636,1)" font-family="Liberation Sans" font-size="13.08" font-weight="normal" font-style="normal" fill="#ffffff">Формулы</text>
<text transform="translate(420.00,54) scale(0.9149,1)" font-family="Liberation Sans" font-size="13.08" font-weight="normal" font-style="normal" fill="#ffffff">Данные</text>
<text transform="translate(486.09,54) scale(0.9100,1)" font-family="Liberation Sans" font-size="13.08" font-weight="normal" font-style="normal" fill="#ffffff">Рецензирование</text>
<text transform="translate(601.13,54) scale(0.8696,1)" font-family="Liberation Sans" font-size="13.08" font-weight="normal" font-style="normal" fill="#ffffff">Вид</text>
<text transform="translate(645.07,54) scale(0.9333,1)" font-family="Liberation Sans" font-size="13.08" font-weight="normal" font-style="normal" fill="#ffffff">Разработчик</text>
<text transform="translate(739.08,54) scale(0.9200,1)" font-family="Liberation Sans" font-size="13.08" font-weight="normal" font-style="normal" fill="#ffffff">Справка</text>
<text x="834.00" y="54" font-family="Liberation Sans" font-size="13.08" font-weight="normal" font-style="normal" fill="#ffffff">Помощн</text>
<text transform="translate(922.10,54) scale(0.9014,1)" font-family="Liberation Sans" font-size="13.08" font-weight="normal" font-style="normal" fill="#ffffff">Поделиться</text>
<text transform="translate(72.08,54) scale(0.9167,1)" font-family="Liberation Sans" font-size="13.08" font-weight="normal" font-style="normal" fill="#017441">Главная</text>
<text transform="translate(11.13,118) scale(0.8704,1)" font-family="Liberation Sans" font-size="13.08" font-weight="normal" font-style="normal" fill="#1e2a44">Вставить</text>
<text transform="translate(6.03,153) scale(0.9744,1)" font-family="Liberation Sans" font-size="11.63" font-weight="normal" font-style="normal" fill="#1e2a44">Буфер обмена</text>
<text transform="translate(183.97,153) scale(1.0270,1)" font-family="Liberation Sans" font-size="11.63" font-weight="normal" font-style="normal" fill="#1e2a44">Шрифт</text>
<text transform="translate(328.99,153) scale(1.0127,1)" font-family="Liberation Sans" font-size="11.63" font-weight="normal" font-style="normal" fill="#1e2a44">Выравнивание</text>
<text transform="translate(461.03,153) scale(0.9688,1)" font-family="Liberation Sans" font-size="11.63" font-weight="normal" font-style="normal" fill="#1e2a44">Число</text>
<text x="620.00" y="153" font-family="Liberation Sans" font-size="11.63" font-weight="normal" font-style="normal" fill="#1e2a44">Стили</text>
<text transform="translate(772.95,153) scale(1.0541,1)" font-family="Liberation Sans" font-size="11.63" font-weight="normal" font-style="normal" fill="#1e2a44">Ячейки</text>
<text transform="translate(851.01,153) scale(0.9885,1)" font-family="Liberation Sans" font-size="11.63" font-weight="normal" font-style="normal" fill="#1e2a44">Редактирование</text>
<text transform="translate(116.08,92) scale(0.9167,1)" font-family="Liberation Sans" font-size="13.08" font-weight="normal" font-style="normal" fill="#222">Calibri</text>
<text transform="translate(227.15,92) scale(0.8462,1)" font-family="Liberation Sans" font-size="13.08" font-weight="normal" font-style="normal" fill="#222">12</text>
<text transform="translate(450.05,84) scale(0.9474,1)" font-family="Liberation Sans" font-size="13.08" font-weight="normal" font-style="normal" fill="#222">Числовой</text>
<text transform="translate(562.08,84) scale(0.9212,1)" font-family="Liberation Sans" font-size="13.08" font-weight="normal" font-style="normal" fill="#1e2a44">Условное форматирование</text>
<text transform="translate(562.08,107) scale(0.9231,1)" font-family="Liberation Sans" font-size="13.08" font-weight="normal" font-style="normal" fill="#1e2a44">Форматировать как таблицу</text>
<text transform="translate(562.09,130) scale(0.9054,1)" font-family="Liberation Sans" font-size="13.08" font-weight="normal" font-style="normal" fill="#1e2a44">Стили ячеек</text>
<text transform="translate(772.13,84) scale(0.8704,1)" font-family="Liberation Sans" font-size="13.08" font-weight="normal" font-style="normal" fill="#1e2a44">Вставить</text>
<text transform="translate(771.10,107) scale(0.8958,1)" font-family="Liberation Sans" font-size="13.08" font-weight="normal" font-style="normal" fill="#1e2a44">Удалить</text>
<text transform="translate(772.07,130) scale(0.9333,1)" font-family="Liberation Sans" font-size="13.08" font-weight="normal" font-style="normal" fill="#1e2a44">Формат</text>
<text x="12.50" y="186" font-family="Liberation Sans" font-size="13.08" font-weight="normal" font-style="normal" fill="#222">D3</text>
<text transform="translate(262.01,186) scale(0.9886,1)" font-family="Liberation Sans" font-size="13.08" font-weight="normal" font-style="normal" fill="#222">=B3*C3</text>
<text x="120.50" y="220" font-family="Liberation Sans" font-size="14.53" font-weight="normal" font-style="normal" fill="#222">A</text>
<text x="267.00" y="220" font-family="Liberation Sans" font-size="14.53" font-weight="normal" font-style="normal" fill="#222">B</text>
<text x="367.50" y="220" font-family="Liberation Sans" font-size="14.53" font-weight="normal" font-style="normal" fill="#222">C</text>
<text x="468.50" y="220" font-family="Liberation Sans" font-size="14.53" font-weight="normal" font-style="normal" fill="#222">D</text>
<text x="563.00" y="220" font-family="Liberation Sans" font-size="14.53" font-weight="normal" font-style="normal" fill="#222">E</text>
<text x="650.00" y="220" font-family="Liberation Sans" font-size="14.53" font-weight="normal" font-style="normal" fill="#222">F</text>
<text x="736.50" y="220" font-family="Liberation Sans" font-size="14.53" font-weight="normal" font-style="normal" fill="#222">G</text>
<text x="823.50" y="220" font-family="Liberation Sans" font-size="14.53" font-weight="normal" font-style="normal" fill="#222">H</text>
<text x="914.00" y="220" font-family="Liberation Sans" font-size="14.53" font-weight="normal" font-style="normal" fill="#222">I</text>
<text x="10.50" y="262" font-family="Liberation Sans" font-size="14.53" font-weight="normal" font-style="normal" fill="#222">1</text>
<text x="10.50" y="283" font-family="Liberation Sans" font-size="14.53" font-weight="normal" font-style="normal" fill="#222">2</text>
<text x="10.50" y="304" font-family="Liberation Sans" font-size="14.53" font-weight="normal" font-style="normal" fill="#222">3</text>
<text x="11.00" y="325" font-family="Liberation Sans" font-size="14.53" font-weight="normal" font-style="normal" fill="#222">4</text>
<text x="10.50" y="346" font-family="Liberation Sans" font-size="14.53" font-weight="normal" font-style="normal" fill="#222">5</text>
<text x="10.50" y="367" font-family="Liberation Sans" font-size="14.53" font-weight="normal" font-style="normal" fill="#222">6</text>
<text x="10.50" y="388" font-family="Liberation Sans" font-size="14.53" font-weight="normal" font-style="normal" fill="#222">7</text>
<text x="10.50" y="409" font-family="Liberation Sans" font-size="14.53" font-weight="normal" font-style="normal" fill="#222">8</text>
<text x="10.50" y="430" font-family="Liberation Sans" font-size="14.53" font-weight="normal" font-style="normal" fill="#222">9</text>
<text x="6.50" y="451" font-family="Liberation Sans" font-size="14.53" font-weight="normal" font-style="normal" fill="#222">10</text>
<text x="7.00" y="472" font-family="Liberation Sans" font-size="14.53" font-weight="normal" font-style="normal" fill="#222">11</text>
<text x="6.50" y="493" font-family="Liberation Sans" font-size="14.53" font-weight="normal" font-style="normal" fill="#222">12</text>
<text x="6.50" y="514" font-family="Liberation Sans" font-size="14.53" font-weight="normal" font-style="normal" fill="#222">13</text>
<text x="6.50" y="535" font-family="Liberation Sans" font-size="14.53" font-weight="normal" font-style="normal" fill="#222">14</text>
<text x="6.50" y="556" font-family="Liberation Sans" font-size="14.53" font-weight="normal" font-style="normal" fill="#222">15</text>
<text x="6.50" y="577" font-family="Liberation Sans" font-size="14.53" font-weight="normal" font-style="normal" fill="#222">16</text>
<text x="6.50" y="598" font-family="Liberation Sans" font-size="14.53" font-weight="normal" font-style="normal" fill="#222">17</text>
<text x="6.50" y="619" font-family="Liberation Sans" font-size="14.53" font-weight="normal" font-style="normal" fill="#222">18</text>
<text x="6.50" y="640" font-family="Liberation Sans" font-size="14.53" font-weight="normal" font-style="normal" fill="#222">19</text>
<text x="6.50" y="661" font-family="Liberation Sans" font-size="14.53" font-weight="normal" font-style="normal" fill="#222">20</text>
<text x="73.00" y="251" font-family="Liberation Sans" font-size="14.53" font-weight="bold" font-style="normal" fill="#000">Наименование</text>
<text transform="translate(237.78,241) scale(1.0169,1)" font-family="Liberation Sans" font-size="14.53" font-weight="bold" font-style="normal" fill="#000">Продано,</text>
<text transform="translate(260.96,262) scale(1.0400,1)" font-family="Liberation Sans" font-size="14.53" font-weight="bold" font-style="normal" fill="#000">шт.</text>
<text transform="translate(335.88,251) scale(1.0153,1)" font-family="Liberation Sans" font-size="14.53" font-weight="bold" font-style="normal" fill="#000">Цена, руб.</text>
<text x="430.70" y="251" font-family="Liberation Sans" font-size="14.53" font-weight="bold" font-style="normal" fill="#000">Сумма, руб.</text>
<text transform="translate(31.97,283) scale(1.0341,1)" font-family="Liberation Sans" font-size="14.53" font-weight="normal" font-style="normal" fill="#000">Велосипед горный</text>
<text transform="translate(284.58,283) scale(0.9700,1)" font-family="Liberation Sans" font-size="14.53" font-weight="normal" font-style="normal" fill="#000">2 441</text>
<text transform="translate(377.82,283) scale(0.9700,1)" font-family="Liberation Sans" font-size="14.53" font-weight="normal" font-style="normal" fill="#000">16 990</text>
<text transform="translate(451.66,283) scale(0.9700,1)" font-family="Liberation Sans" font-size="14.53" font-weight="normal" font-style="normal" fill="#000">41 472 590</text>
<text transform="translate(31.97,304) scale(1.0258,1)" font-family="Liberation Sans" font-size="14.53" font-weight="normal" font-style="normal" fill="#000">Велосипед детский</text>
<text transform="translate(296.22,304) scale(0.9700,1)" font-family="Liberation Sans" font-size="14.53" font-weight="normal" font-style="normal" fill="#000">553</text>
<text transform="translate(385.58,304) scale(0.9700,1)" font-family="Liberation Sans" font-size="14.53" font-weight="normal" font-style="normal" fill="#000">7 990</text>
<text transform="translate(459.42,304) scale(0.9700,1)" font-family="Liberation Sans" font-size="14.53" font-weight="normal" font-style="normal" fill="#000">4 418 470</text>
<text transform="translate(31.97,325) scale(1.0310,1)" font-family="Liberation Sans" font-size="14.53" font-weight="normal" font-style="normal" fill="#000">Велосипед дорожный</text>
<text transform="translate(296.22,325) scale(0.9700,1)" font-family="Liberation Sans" font-size="14.53" font-weight="normal" font-style="normal" fill="#000">223</text>
<text transform="translate(377.82,325) scale(0.9700,1)" font-family="Liberation Sans" font-size="14.53" font-weight="normal" font-style="normal" fill="#000">17 990</text>
<text transform="translate(460.39,325) scale(0.9700,1)" font-family="Liberation Sans" font-size="14.53" font-weight="normal" font-style="normal" fill="#000">4 011 770</text>
<text transform="translate(31.98,346) scale(1.0231,1)" font-family="Liberation Sans" font-size="14.53" font-weight="normal" font-style="normal" fill="#000">Велосипед спортивный</text>
<text transform="translate(284.58,346) scale(0.9700,1)" font-family="Liberation Sans" font-size="14.53" font-weight="normal" font-style="normal" fill="#000">2 560</text>
<text transform="translate(377.82,346) scale(0.9700,1)" font-family="Liberation Sans" font-size="14.53" font-weight="normal" font-style="normal" fill="#000">12 990</text>
<text transform="translate(451.66,346) scale(0.9700,1)" font-family="Liberation Sans" font-size="14.53" font-weight="normal" font-style="normal" fill="#000">33 254 400</text>
<text transform="translate(31.98,367) scale(1.0165,1)" font-family="Liberation Sans" font-size="14.53" font-weight="normal" font-style="normal" fill="#000">Велосипед трековый</text>
<text transform="translate(296.22,367) scale(0.9700,1)" font-family="Liberation Sans" font-size="14.53" font-weight="normal" font-style="normal" fill="#000">869</text>
<text transform="translate(377.82,367) scale(0.9700,1)" font-family="Liberation Sans" font-size="14.53" font-weight="normal" font-style="normal" fill="#000">21 490</text>
<text transform="translate(451.66,367) scale(0.9700,1)" font-family="Liberation Sans" font-size="14.53" font-weight="normal" font-style="normal" fill="#000">18 674 810</text>
<text transform="translate(31.99,388) scale(1.0100,1)" font-family="Liberation Sans" font-size="14.53" font-weight="normal" font-style="normal" fill="#000">Груша боксерская</text>
<text transform="translate(296.22,388) scale(0.9700,1)" font-family="Liberation Sans" font-size="14.53" font-weight="normal" font-style="normal" fill="#000">153</text>
<text transform="translate(377.82,388) scale(0.9700,1)" font-family="Liberation Sans" font-size="14.53" font-weight="normal" font-style="normal" fill="#000">12 990</text>
<text transform="translate(459.42,388) scale(0.9700,1)" font-family="Liberation Sans" font-size="14.53" font-weight="normal" font-style="normal" fill="#000">1 987 470</text>
<text transform="translate(31.97,409) scale(1.0284,1)" font-family="Liberation Sans" font-size="14.53" font-weight="normal" font-style="normal" fill="#000">Перчатки боксерские</text>
<text transform="translate(303.98,409) scale(0.9700,1)" font-family="Liberation Sans" font-size="14.53" font-weight="normal" font-style="normal" fill="#000">98</text>
<text transform="translate(385.58,409) scale(0.9700,1)" font-family="Liberation Sans" font-size="14.53" font-weight="normal" font-style="normal" fill="#000">3 990</text>
<text transform="translate(471.06,409) scale(0.9700,1)" font-family="Liberation Sans" font-size="14.53" font-weight="normal" font-style="normal" fill="#000">391 020</text>
<text transform="translate(31.97,430) scale(1.0282,1)" font-family="Liberation Sans" font-size="14.53" font-weight="normal" font-style="normal" fill="#000">Упоры для отжимания</text>
<text transform="translate(296.22,430) scale(0.9700,1)" font-family="Liberation Sans" font-size="14.53" font-weight="normal" font-style="normal" fill="#000">254</text>
<text transform="translate(397.22,430) scale(0.9700,1)" font-family="Liberation Sans" font-size="14.53" font-weight="normal" font-style="normal" fill="#000">590</text>
<text transform="translate(471.06,430) scale(0.9700,1)" font-family="Liberation Sans" font-size="14.53" font-weight="normal" font-style="normal" fill="#000">149 860</text>
<text x="32.00" y="451" font-family="Liberation Sans" font-size="14.53" font-weight="normal" font-style="normal" fill="#000">Скакалка скоростная</text>
<text transform="translate(296.22,451) scale(0.9700,1)" font-family="Liberation Sans" font-size="14.53" font-weight="normal" font-style="normal" fill="#000">445</text>
<text transform="translate(397.22,451) scale(0.9700,1)" font-family="Liberation Sans" font-size="14.53" font-weight="normal" font-style="normal" fill="#000">390</text>
<text transform="translate(471.06,451) scale(0.9700,1)" font-family="Liberation Sans" font-size="14.53" font-weight="normal" font-style="normal" fill="#000">173 550</text>
<text transform="translate(31.99,472) scale(1.0104,1)" font-family="Liberation Sans" font-size="14.53" font-weight="normal" font-style="normal" fill="#000">Скакалка со счетчиком</text>
<text transform="translate(297.19,472) scale(0.9700,1)" font-family="Liberation Sans" font-size="14.53" font-weight="normal" font-style="normal" fill="#000">112</text>
<text transform="translate(397.22,472) scale(0.9700,1)" font-family="Liberation Sans" font-size="14.53" font-weight="normal" font-style="normal" fill="#000">890</text>
<text transform="translate(478.82,472) scale(0.9700,1)" font-family="Liberation Sans" font-size="14.53" font-weight="normal" font-style="normal" fill="#000">99 680</text>
<text transform="translate(33.00,493) scale(1.0331,1)" font-family="Liberation Sans" font-size="14.53" font-weight="normal" font-style="normal" fill="#000">Турник в дверной проем</text>
<text transform="translate(296.22,493) scale(0.9700,1)" font-family="Liberation Sans" font-size="14.53" font-weight="normal" font-style="normal" fill="#000">341</text>
<text transform="translate(385.58,493) scale(0.9700,1)" font-family="Liberation Sans" font-size="14.53" font-weight="normal" font-style="normal" fill="#000">1 190</text>
<text transform="translate(471.06,493) scale(0.9700,1)" font-family="Liberation Sans" font-size="14.53" font-weight="normal" font-style="normal" fill="#000">405 790</text>
<text transform="translate(112.52,690) scale(0.8839,1)" font-family="Liberation Sans" font-size="14.53" font-weight="bold" font-style="normal" fill="#017441">microexcel.ru</text>
<text transform="translate(8.98,714) scale(1.0171,1)" font-family="Liberation Sans" font-size="11.63" font-weight="normal" font-style="normal" fill="#444">Готово</text>
<text transform="translate(962.69,714) scale(0.9062,1)" font-family="Liberation Sans" font-size="11.63" font-weight="normal" font-style="normal" fill="#444">100 %</text>
</g>
<g>
<rect x="249.5" y="165.5" width="69" height="33" rx="7" ry="7" fill="none" stroke="#ff0000" stroke-width="3"/>
<rect x="423" y="287" width="101" height="21" fill="none" stroke="#017441" stroke-width="2" shape-rendering="crispEdges"/>
<rect x="520" y="305" width="7" height="6" fill="#ffffff" shape-rendering="crispEdges"/><rect x="522" y="306" width="5" height="4" fill="#017441" shape-rendering="crispEdges"/>
<rect x="419.5" y="283.5" width="110" height="28" rx="8" ry="8" fill="none" stroke="#ff0000" stroke-width="3"/>
</g>
</svg></body></html>
